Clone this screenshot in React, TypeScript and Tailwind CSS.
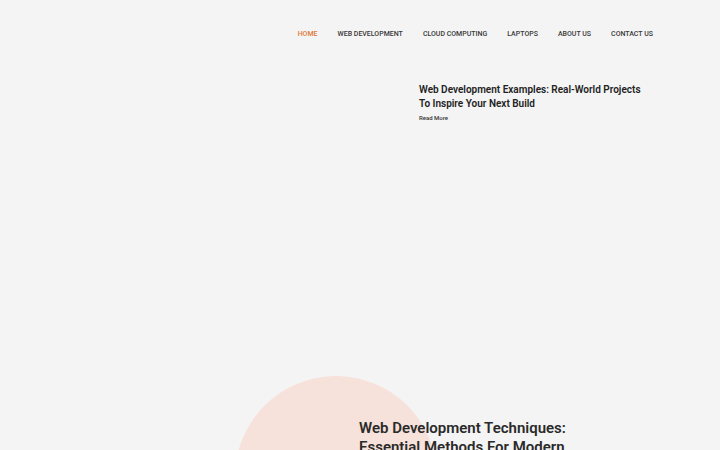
const navItems = ["Home", "Web Development", "Cloud Computing", "Laptops", "About Us", "Contact Us"];

export default function App() {
  return (
    <div
      className="h-[450px] w-[720px] overflow-hidden bg-[#f4f4f4] text-[#2a2a2a]"
      style={{ fontFamily: "Roboto, 'Liberation Sans', sans-serif" }}
    >
      <header className="flex h-[68px] items-center justify-end pr-[67px]">
        <nav className="flex items-center gap-[20px]">
          {navItems.map((item, i) => (
            <a
              key={item}
              href="#"
              className={`text-[7px] font-medium uppercase leading-none ${i === 0 ? "text-[#e0783a]" : "text-[#383838]"}`}
            >
              {item}
            </a>
          ))}
        </nav>
      </header>

      <section className="flex h-[308px] pl-[419px] pt-[15px]">
        <div className="w-[228px]">
          <h2 className="text-[10px] font-semibold leading-[13.5px] text-[#222]">
            Web Development Examples: Real-World Projects To Inspire Your Next Build
          </h2>
          <a href="#" className="mt-[3px] block text-[6px] font-medium leading-[9px] text-[#333]">
            Read More
          </a>
        </div>
      </section>

      <section className="relative flex pl-[359px]">
        <div className="absolute left-[235px] top-0 h-[202px] w-[202px] rounded-full bg-[#f6e2da]" />
        <h2 className="relative mt-[43px] w-[230px] text-[15px] font-semibold leading-[19px] text-[#2a2a2a]">
          Web Development Techniques: Essential Methods For Modern
        </h2>
      </section>
    </div>
  );
}
